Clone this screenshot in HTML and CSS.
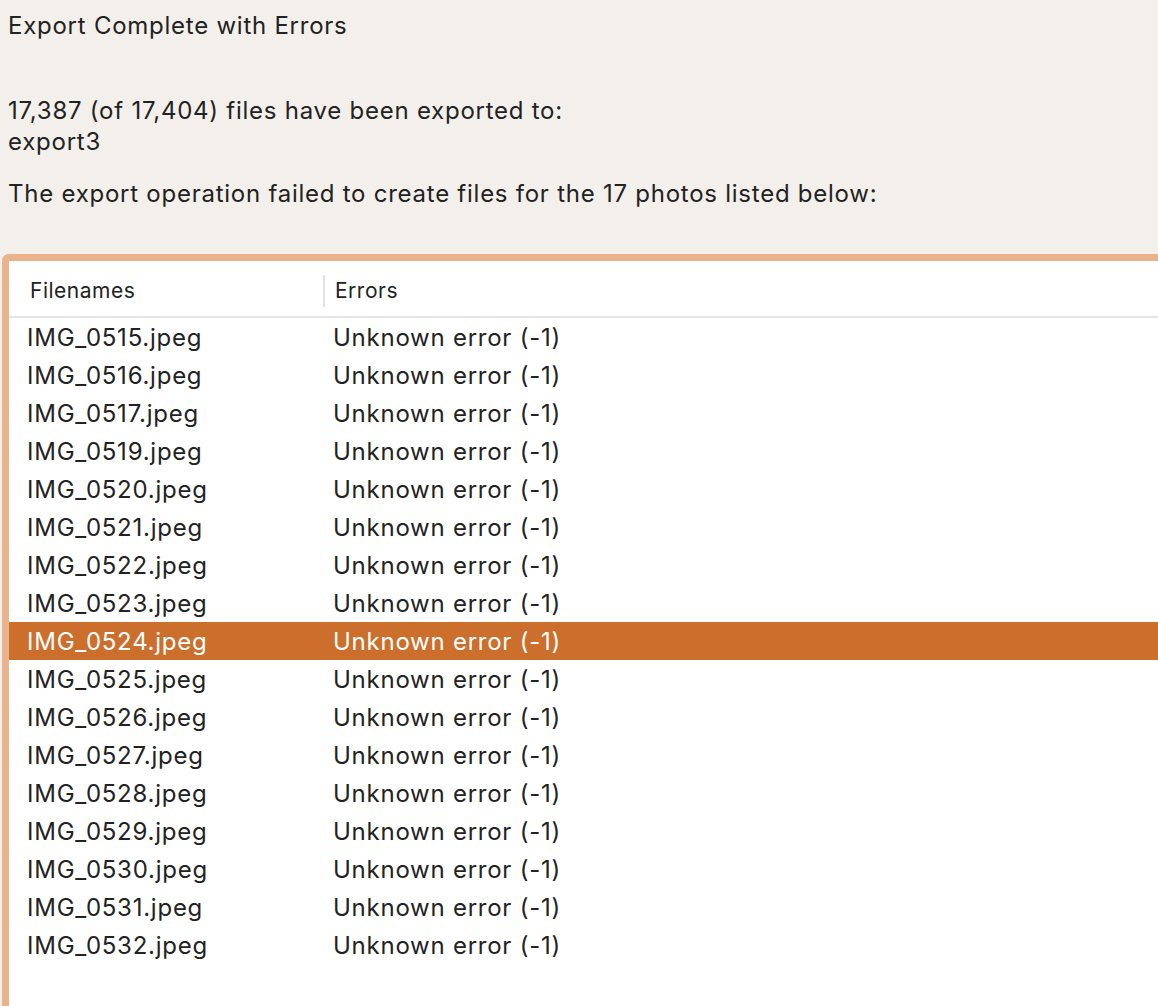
FILE: index.html
```html
<!DOCTYPE html>
<html>
<head>
<meta charset="utf-8">
<link rel="stylesheet" href="styles.css">
</head>
<body>
<div class="dialog">
  <div class="title">Export Complete with Errors</div>
  <div class="summary">
    <div>17,387 (of 17,404) files have been exported to:</div>
    <div>export3</div>
  </div>
  <div class="failed">The export operation failed to create files for the 17 photos listed below:</div>
  <div class="frame">
    <div class="table">
      <div class="head">
        <div class="hcell name">Filenames</div>
        <div class="hcell err">Errors</div>
      </div>
      <div class="rows">
        <div class="row"><span class="c1">IMG_0515.jpeg</span><span class="c2">Unknown error (-1)</span></div>
        <div class="row"><span class="c1">IMG_0516.jpeg</span><span class="c2">Unknown error (-1)</span></div>
        <div class="row"><span class="c1">IMG_0517.jpeg</span><span class="c2">Unknown error (-1)</span></div>
        <div class="row"><span class="c1">IMG_0519.jpeg</span><span class="c2">Unknown error (-1)</span></div>
        <div class="row"><span class="c1">IMG_0520.jpeg</span><span class="c2">Unknown error (-1)</span></div>
        <div class="row"><span class="c1">IMG_0521.jpeg</span><span class="c2">Unknown error (-1)</span></div>
        <div class="row"><span class="c1">IMG_0522.jpeg</span><span class="c2">Unknown error (-1)</span></div>
        <div class="row"><span class="c1">IMG_0523.jpeg</span><span class="c2">Unknown error (-1)</span></div>
        <div class="row selected"><span class="c1">IMG_0524.jpeg</span><span class="c2">Unknown error (-1)</span></div>
        <div class="row"><span class="c1">IMG_0525.jpeg</span><span class="c2">Unknown error (-1)</span></div>
        <div class="row"><span class="c1">IMG_0526.jpeg</span><span class="c2">Unknown error (-1)</span></div>
        <div class="row"><span class="c1">IMG_0527.jpeg</span><span class="c2">Unknown error (-1)</span></div>
        <div class="row"><span class="c1">IMG_0528.jpeg</span><span class="c2">Unknown error (-1)</span></div>
        <div class="row"><span class="c1">IMG_0529.jpeg</span><span class="c2">Unknown error (-1)</span></div>
        <div class="row"><span class="c1">IMG_0530.jpeg</span><span class="c2">Unknown error (-1)</span></div>
        <div class="row"><span class="c1">IMG_0531.jpeg</span><span class="c2">Unknown error (-1)</span></div>
        <div class="row"><span class="c1">IMG_0532.jpeg</span><span class="c2">Unknown error (-1)</span></div>
      </div>
    </div>
  </div>
</div>
</body>
</html>
```

FILE: styles.css
```css
html, body {
  margin: 0;
  padding: 0;
  background: #f3efeb;
  overflow: hidden;
  height: 100%;
}
body {
  font-family: Inter, "Noto Sans", sans-serif;
  color: #222222;
  letter-spacing: 0.75px;
}
.dialog {
  display: flex;
  flex-direction: column;
  height: 100%;
}
.title {
  font-size: 24px;
  line-height: 30px;
  padding: 11px 0 0 8px;
}
.summary {
  font-size: 24px;
  line-height: 31px;
  padding: 54px 0 0 8px;
}
.failed {
  font-size: 24px;
  line-height: 31px;
  padding: 21px 0 0 8px;
}
.frame {
  margin: 45px 0 0 2px;
  flex: 1 1 0;
  min-height: 0;
  border: 7px solid #ebb38d;
  border-right: none;
  border-bottom: none;
  border-radius: 7px 0 0 0;
  background: #fff;
  overflow: hidden;
}
.table {
  display: flex;
  flex-direction: column;
}
.head {
  height: 57px;
  box-sizing: border-box;
  padding-top: 4px;
  border-bottom: 2px solid #e4e4e4;
  display: flex;
  align-items: center;
  font-size: 21px;
  letter-spacing: 0.5px;
}
.hcell.name {
  width: 314px;
  padding-left: 21px;
  box-sizing: border-box;
}
.hcell.err {
  border-left: 2px solid #e2e2e2;
  padding-left: 10px;
  line-height: 32px;
}
.row {
  height: 38px;
  display: flex;
  align-items: center;
  font-size: 24px;
}
.row .c1 {
  width: 306px;
  padding-left: 18px;
  flex: none;
}
.row.selected {
  background: #cc6f2d;
  color: #fff;
}
```
